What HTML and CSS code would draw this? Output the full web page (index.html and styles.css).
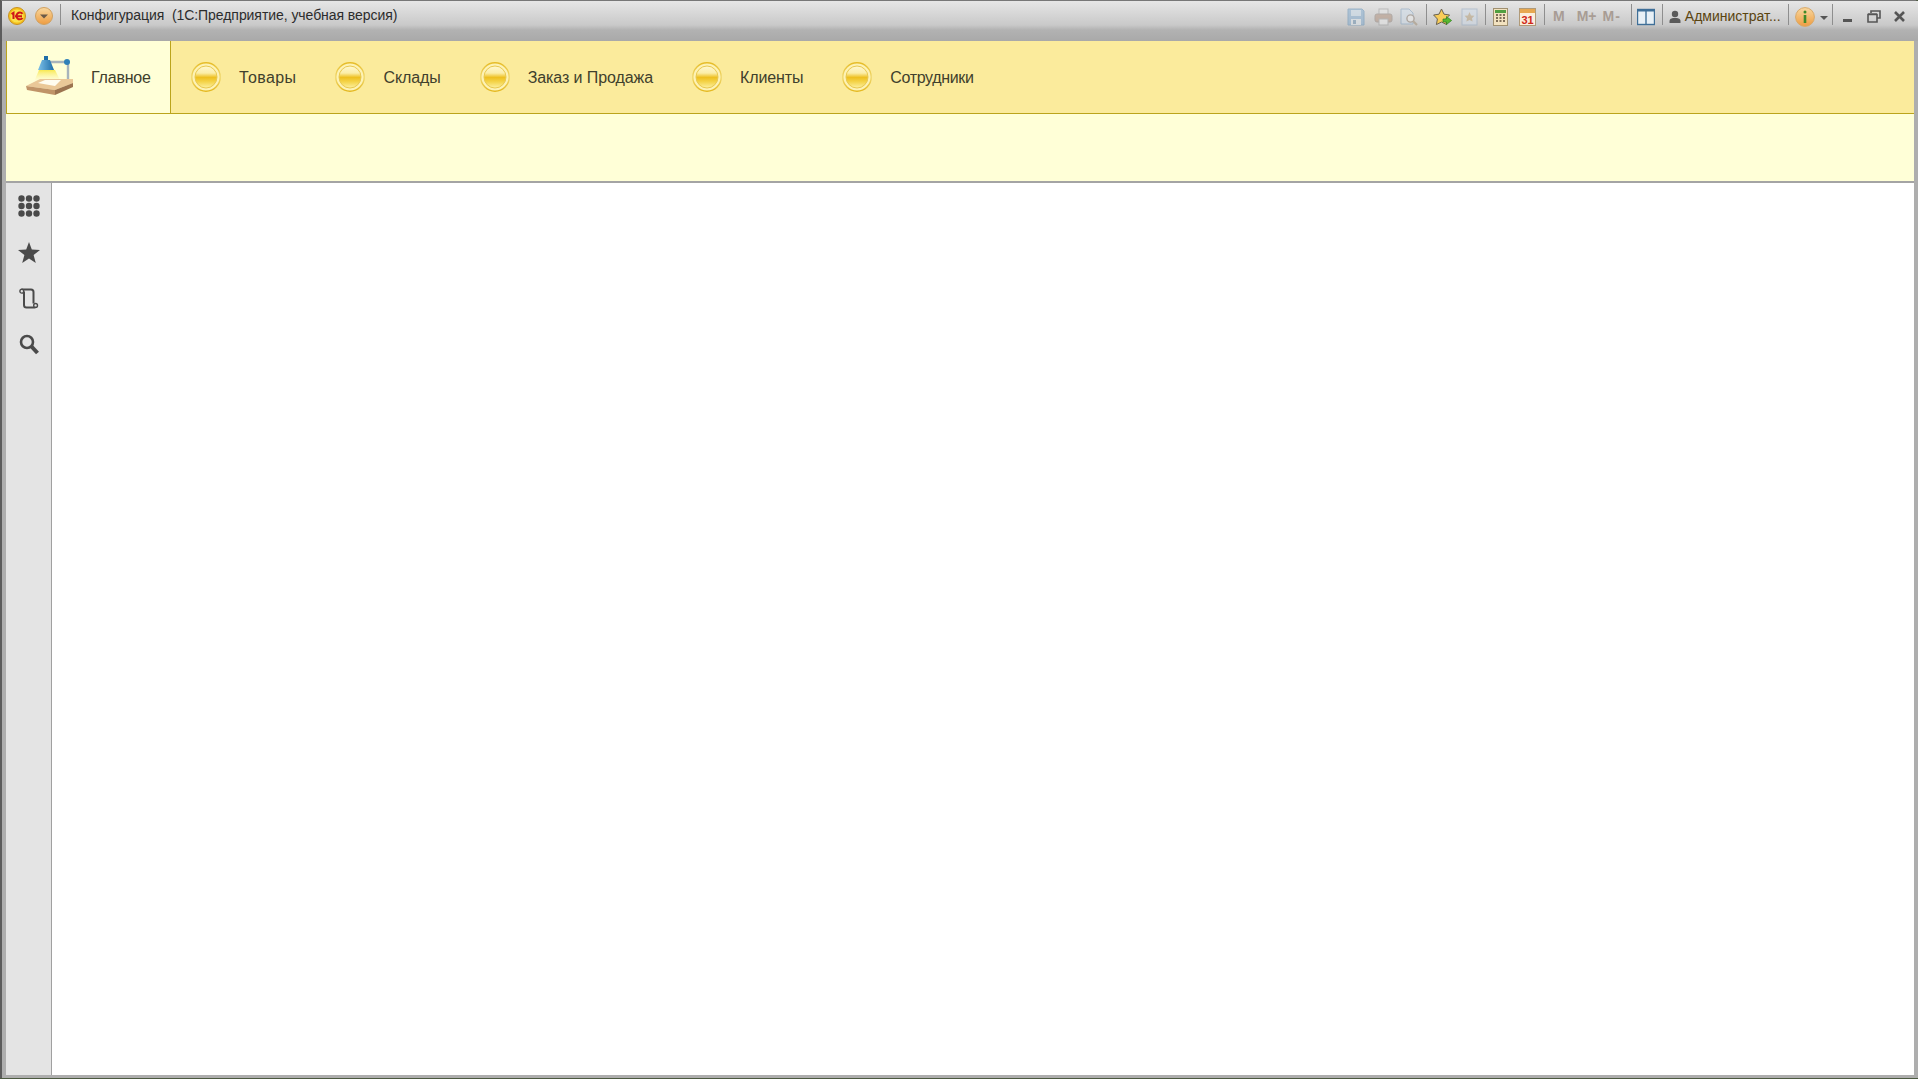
FILE: index.html
```html
<!DOCTYPE html>
<html lang="ru">

<head>
    <meta charset="UTF-8">
    <meta name="viewport" content="width=device-width, initial-scale=1.0">
    <title>Конфигурация (1С:Предприятие, учебная версия)</title>
    <link rel="stylesheet" href="styles.css">
</head>

<body>
    <svg class="defs" width="0" height="0">
        <defs>
            <linearGradient id="goldInner" x1="0" y1="0" x2="0" y2="1">
                <stop offset="0" stop-color="#fff8d0" />
                <stop offset="0.32" stop-color="#fbeea8" />
                <stop offset="0.52" stop-color="#eec020" />
                <stop offset="0.72" stop-color="#f4d44a" />
                <stop offset="1" stop-color="#fdf0a0" />
            </linearGradient>
            <linearGradient id="goldOuter" x1="0" y1="0" x2="0" y2="1">
                <stop offset="0" stop-color="#e6bc28" />
                <stop offset="0.5" stop-color="#f0d870" />
                <stop offset="1" stop-color="#e4b820" />
            </linearGradient>
            <linearGradient id="orangeBall" x1="0" y1="0" x2="0" y2="1">
                <stop offset="0" stop-color="#f8d8a0" />
                <stop offset="1" stop-color="#ee9c40" />
            </linearGradient>
            <symbol id="gold" viewBox="0 0 30 30">
                <circle cx="15" cy="15" r="14.2" fill="#fdf2b4" stroke="url(#goldOuter)" stroke-width="1.4" />
                <circle cx="15" cy="15" r="11" fill="url(#goldInner)" stroke="#e8c850" />
            </symbol>
        </defs>
    </svg>

    <div class="window">
        <header class="titlebar">
            <svg class="logo" width="18" height="18" viewBox="0 0 18 18">
                <circle cx="9" cy="9" r="8.5" fill="#f6c21c" stroke="#c89020" />
                <circle cx="9" cy="9" r="6.6" fill="#fbe14a" />
                <path d="M3.5 7 L5.5 5.8 V12 M14.5 6.8 A3.4 3.4 0 1 0 14.5 11 M7 9.2 H14" fill="none" stroke="#d01818" stroke-width="2" />
            </svg>
            <svg class="menu-ball" width="18" height="18" viewBox="0 0 18 18">
                <circle cx="9" cy="9" r="8.5" fill="url(#orangeBall)" stroke="#d0a060" />
                <path d="M5 7.5 H13 L9 11.5 Z" fill="#6a5a48" />
            </svg>
            <span class="sep first-sep"></span>
            <span class="title-text">Конфигурация&nbsp; (1С:Предприятие, учебная версия)</span>

            <div class="tools">
                <svg class="tool off" width="18" height="18" viewBox="0 0 18 18">
                    <path d="M1 1 H15 L17 3 V17 H1 Z" fill="#7faad0" stroke="#5f8fb8" />
                    <rect x="4" y="2" width="10" height="6" fill="#c8dcec" />
                    <rect x="4" y="11" width="10" height="6" fill="#dfe8ee" />
                    <rect x="6" y="12" width="3" height="4" fill="#6a90b0" />
                </svg>
                <svg class="tool off print" width="19" height="18" viewBox="0 0 19 18">
                    <rect x="5" y="1" width="9" height="6" fill="#e8e8e8" stroke="#999" />
                    <rect x="1" y="6" width="17" height="8" rx="2" fill="#b08e78" stroke="#8d8078" />
                    <rect x="5" y="11" width="9" height="6" fill="#eee" stroke="#999" />
                </svg>
                <svg class="tool off preview" width="18" height="18" viewBox="0 0 18 18">
                    <path d="M1 1 H9 L13 5 V16 H1 Z" fill="#d2e0ee" stroke="#7fa0c0" />
                    <circle cx="10.5" cy="10.5" r="3.6" fill="#f2f2f2" stroke="#8a7c70" stroke-width="1.4" />
                    <path d="M13 13 L17 17" stroke="#a08c70" stroke-width="2.2" />
                </svg>
                <span class="sep sep-a"></span>
                <svg class="tool star-go" width="19" height="19" viewBox="0 0 19 19">
                    <path d="M8.5 1 L11 6.2 L16.6 7 L12.6 11 L13.6 16.6 L8.5 14 L3.4 16.6 L4.4 11 L0.6 7 L6 6.2 Z" fill="#f8cc58" stroke="#6a6250" />
                    <path d="M10 11 H13.5 V8.5 L18.6 12.5 L13.5 16.5 V14 H10 Z" fill="#58b830" stroke="#2f7f20" stroke-width="0.7" />
                </svg>
                <svg class="tool off star-box" width="17" height="18" viewBox="0 0 17 18">
                    <rect x="1" y="1" width="15" height="16" fill="#d2deec" stroke="#8fa8c4" />
                    <path d="M8.5 4 L10 7.4 L13.4 7.8 L11 10.2 L11.6 13.6 L8.5 12 L5.4 13.6 L6 10.2 L3.6 7.8 L7 7.4 Z" fill="#b8a078" />
                </svg>
                <span class="sep sep-b"></span>
                <svg class="tool calc" width="15" height="18" viewBox="0 0 15 18">
                    <rect x="0.5" y="0.5" width="14" height="17" fill="#f2e2c0" stroke="#a09070" />
                    <rect x="2" y="2" width="11" height="3" fill="#50a040" />
                    <path d="M3 7 H5 M6.5 7 H8.5 M10 7 H12 M3 10 H5 M6.5 10 H8.5 M10 10 H12 M3 13 H5 M6.5 13 H8.5 M10 13 H12" stroke="#5a4a38" stroke-width="1.6" />
                </svg>
                <svg class="tool cal" width="17" height="18" viewBox="0 0 17 18">
                    <rect x="0.5" y="0.5" width="16" height="17" fill="#fbeedd" stroke="#b09a78" />
                    <rect x="1" y="1" width="15" height="4" fill="#e8a850" />
                    <text class="cal-day" x="8.5" y="15.5" text-anchor="middle">31</text>
                </svg>
                <span class="sep sep-c"></span>
                <span class="mem mem-m">M</span>
                <span class="mem mem-plus">M+</span>
                <span class="mem mem-minus">M-</span>
                <span class="sep sep-d"></span>
                <svg class="tool panel-ico" width="18" height="18" viewBox="0 0 18 18">
                    <rect x="0.5" y="1.5" width="17" height="15" fill="#e8f0f6" stroke="#3f6f98" stroke-width="1.4" />
                    <rect x="0.5" y="1.5" width="17" height="2" fill="#3f6f98" />
                    <path d="M9 2 V16" stroke="#3f6f98" stroke-width="1.4" />
                </svg>
                <span class="sep sep-e"></span>
                <svg class="tool user-ico" width="12" height="14" viewBox="0 0 12 14">
                    <circle cx="6" cy="4" r="3.2" fill="#5a5a5a" />
                    <path d="M0.5 13 V11 Q0.5 8.6 4 8 H8 Q11.5 8.6 11.5 11 V13 Z" fill="#5a5a5a" />
                </svg>
                <span class="user-name">Администрат...</span>
                <span class="sep sep-f"></span>
                <svg class="tool info" width="20" height="20" viewBox="0 0 20 20">
                    <circle cx="10" cy="10" r="9.4" fill="url(#orangeBall)" stroke="#d8a868" />
                    <circle cx="10" cy="5" r="1.5" fill="#3f8a28" />
                    <rect x="8.7" y="8" width="2.6" height="8" fill="#3f8a28" />
                </svg>
                <svg class="tool info-arrow" width="8" height="4" viewBox="0 0 8 4">
                    <path d="M0 0 H8 L4 4 Z" fill="#555" />
                </svg>
                <span class="sep sep-g"></span>
                <svg class="tool win-min" width="9" height="4" viewBox="0 0 9 4">
                    <rect width="9" height="3" y="1" fill="#555" />
                </svg>
                <svg class="tool win-max" width="14" height="13" viewBox="0 0 14 13">
                    <path d="M4 3 V1 H13 V8 H10 M1 4.5 H10 V12 H1 Z M1 4 H10" fill="none" stroke="#555" stroke-width="1.6" />
                </svg>
                <svg class="tool win-close" width="11" height="11" viewBox="0 0 11 11">
                    <path d="M1 1 L10 10 M10 1 L1 10" stroke="#555" stroke-width="2.6" />
                </svg>
            </div>
        </header>

        <nav class="sections">
            <a class="section section-main">
                <svg class="lamp" width="50" height="42" viewBox="0 0 50 42">
                    <defs>
                        <linearGradient id="lampShade" x1="0" y1="0" x2="1" y2="0">
                            <stop offset="0" stop-color="#7cc0e8" />
                            <stop offset="1" stop-color="#1f6ea8" />
                        </linearGradient>
                        <linearGradient id="lampLight" x1="0" y1="0" x2="0" y2="1">
                            <stop offset="0" stop-color="#f8e850" />
                            <stop offset="1" stop-color="#fffde0" stop-opacity="0.3" />
                        </linearGradient>
                    </defs>
                    <path d="M14 14 H30 L36 26 H9 Z" fill="url(#lampLight)" />
                    <path d="M22 6 H42 M43 7 V26" fill="none" stroke="#a8b4bc" stroke-width="2.4" />
                    <rect x="19" y="0" width="4" height="5" fill="#1f6ea8" />
                    <path d="M17 4 H25 L29 14 H13 Z" fill="url(#lampShade)" />
                    <circle cx="42" cy="6" r="3" fill="#2f80b8" />
                    <path d="M1 30 L15 23 H48 V27 L30 34 Z" fill="#eac898" />
                    <path d="M1 30 L30 34 V39 L2 34 Z" fill="#c09468" />
                    <path d="M30 34 L48 27 V31 L30 39 Z" fill="#9c7450" />
                    <path d="M13 27 L20 24 H36 L30 30 Z" fill="#fffdf0" />
                </svg>
                <span class="section-name">Главное</span>
            </a>
            <a class="section"><svg class="gold" width="30" height="30"><use href="#gold" /></svg><span class="section-name name-goods">Товары</span></a>
            <a class="section"><svg class="gold" width="30" height="30"><use href="#gold" /></svg><span class="section-name name-stock">Склады</span></a>
            <a class="section"><svg class="gold" width="30" height="30"><use href="#gold" /></svg><span class="section-name name-orders">Заказ и Продажа</span></a>
            <a class="section"><svg class="gold" width="30" height="30"><use href="#gold" /></svg><span class="section-name name-clients">Клиенты</span></a>
            <a class="section"><svg class="gold" width="30" height="30"><use href="#gold" /></svg><span class="section-name name-staff">Сотрудники</span></a>
        </nav>

        <div class="func-panel"></div>

        <div class="workspace">
            <aside class="sidebar">
                <div class="side-btn">
                    <svg width="22" height="22" viewBox="0 0 22 22" fill="#4a4a4a">
                        <circle cx="3.5" cy="3.5" r="3.2" /><circle cx="11" cy="3.5" r="3.2" /><circle cx="18.5" cy="3.5" r="3.2" />
                        <circle cx="3.5" cy="11" r="3.2" /><circle cx="11" cy="11" r="3.2" /><circle cx="18.5" cy="11" r="3.2" />
                        <circle cx="3.5" cy="18.5" r="3.2" /><circle cx="11" cy="18.5" r="3.2" /><circle cx="18.5" cy="18.5" r="3.2" />
                    </svg>
                </div>
                <div class="side-btn">
                    <svg width="22" height="21" viewBox="0 0 22 21">
                        <path d="M11 0 L13.8 7.4 L22 8 L15.6 13 L17.8 21 L11 16.6 L4.2 21 L6.4 13 L0 8 L8.2 7.4 Z" fill="#4a4a4a" />
                    </svg>
                </div>
                <div class="side-btn">
                    <svg width="20" height="21" viewBox="0 0 20 21" fill="none" stroke="#4a4a4a" stroke-width="2">
                        <path d="M2.5 1.5 H12 Q14.5 1.5 14.5 4 V15.5 M5 3.5 V17 Q5 19.5 7.5 19.5 H16.5" />
                        <circle cx="2.8" cy="3.2" r="1.9" fill="#e4e4e4" stroke-width="1.4" />
                        <circle cx="16.6" cy="17.4" r="1.9" fill="#e4e4e4" stroke-width="1.4" />
                    </svg>
                </div>
                <div class="side-btn">
                    <svg width="20" height="21" viewBox="0 0 20 21" fill="none" stroke="#4a4a4a">
                        <circle cx="8" cy="8" r="6" stroke-width="2.6" />
                        <path d="M12.5 12.5 L18.5 19" stroke-width="4" />
                    </svg>
                </div>
            </aside>
            <main class="content"></main>
        </div>
    </div>
</body>

</html>
```

FILE: styles.css
```css
html,
body {
    height: 100%;
    margin: 0;
}

body {
    font-family: "Liberation Sans", Arial, sans-serif;
    background-color: #4c5a40;
    overflow: hidden;
}

.defs {
    display: block;
    height: 0;
}

.window {
    display: flex;
    flex-direction: column;
    box-sizing: border-box;
    height: 1078px;
    padding: 0 4px 3px 4px;
    border-left: 2px solid #5c5c5c;
    border-top: 1px solid #777777;
    border-top-right-radius: 4px;
    background: #aeaeae;
}

/* title bar */
.titlebar {
    display: flex;
    align-items: flex-start;
    flex: none;
    height: 40px;
    margin: 0 -4px 0 -4px;
    padding-left: 6px;
    background: linear-gradient(#e6e6e6 0, #c9c9c9 24px, #b2b2b2 29px, #a9a9a9 40px);
}

.logo {
    margin-top: 6px;
}

.menu-ball {
    margin: 6px 0 0 9px;
}

.sep {
    flex: none;
    width: 1px;
    height: 21px;
    margin-top: 3px;
    background: #8e8e8e;
}

.first-sep {
    margin-left: 7px;
}

.title-text {
    margin: 6px 0 0 10px;
    font-size: 14px;
    letter-spacing: -0.06px;
    line-height: 16px;
    color: #2c2c2c;
    white-space: nowrap;
}

.tools {
    display: flex;
    align-items: flex-start;
    margin-left: auto;
    width: 571px;
    flex: none;
}

.tool {
    flex: none;
    margin-top: 7px;
}

.off {
    opacity: 0.5;
}

.print { margin-left: 9px; }
.preview { margin-left: 7px; }
.sep-a { margin-left: 8px; }
.star-go { margin-left: 6px; }
.star-box { margin-left: 9px; }
.sep-b { margin-left: 7px; }
.calc { margin-left: 7px; }
.cal { margin-left: 11px; }
.sep-c { margin-left: 8px; }
.sep-d { margin-left: 10px; }
.panel-ico { margin-left: 5px; }
.sep-e { margin-left: 7px; }
.user-ico { margin: 9px 0 0 6px; }
.sep-f { margin-left: 6px; }
.info { margin: 6px 0 0 6px; }
.info-arrow { margin: 15px 0 0 5px; }
.sep-g { margin-left: 4px; }
.win-min { margin: 17px 0 0 10px; }
.win-max { margin: 9px 0 0 15px; }
.win-close { margin: 10px 0 0 13px; }

.cal-day {
    font-size: 11px;
    font-weight: bold;
    fill: #d02818;
}

.mem {
    flex: none;
    margin-top: 7px;
    font-size: 14px;
    font-weight: bold;
    line-height: 16px;
    color: #a89c94;
}

.mem-m { margin-left: 8px; }
.mem-plus { margin-left: 12px; }
.mem-minus { margin-left: 6px; letter-spacing: 1px; }

.user-name {
    flex: none;
    width: 97px;
    margin: 7px 0 0 4px;
    font-size: 14px;
    line-height: 16px;
    color: #5a4410;
    white-space: nowrap;
}

/* sections panel */
.sections {
    display: flex;
    flex: none;
    height: 72px;
    border-bottom: 1px solid #bba41c;
    background: #fbeb9c;
}

.section {
    display: flex;
    align-items: center;
    padding: 0 19px 0 20px;
    gap: 18px;
    font-size: 16px;
    color: #40402c;
    white-space: nowrap;
}

.section-name {
    padding-top: 1px;
    letter-spacing: -0.2px;
}

.name-goods { letter-spacing: 0.4px; }
.name-stock { letter-spacing: -0.1px; }
.name-orders { letter-spacing: -0.08px; }
.name-clients { letter-spacing: -0.13px; }
.name-staff { letter-spacing: -0.35px; }

.section-main {
    box-sizing: border-box;
    width: 165px;
    padding: 0 0 0 18px;
    gap: 16px;
    border-left: 1px solid #bba41c;
    border-right: 1px solid #bba41c;
    background: #ffffd7;
}

.lamp {
    flex: none;
}

.gold {
    flex: none;
}

.func-panel {
    flex: none;
    height: 67px;
    border-bottom: 2px solid #a4a4a4;
    background: #ffffd7;
}

/* main area */
.workspace {
    display: flex;
    flex: 1;
    min-height: 0;
}

.sidebar {
    flex: none;
    width: 45px;
    border-right: 1px solid #a0a0a0;
    background: #e4e4e4;
}

.side-btn {
    display: flex;
    align-items: center;
    justify-content: center;
    height: 46px;
}

.content {
    flex: 1;
    background: #ffffff;
}
```
